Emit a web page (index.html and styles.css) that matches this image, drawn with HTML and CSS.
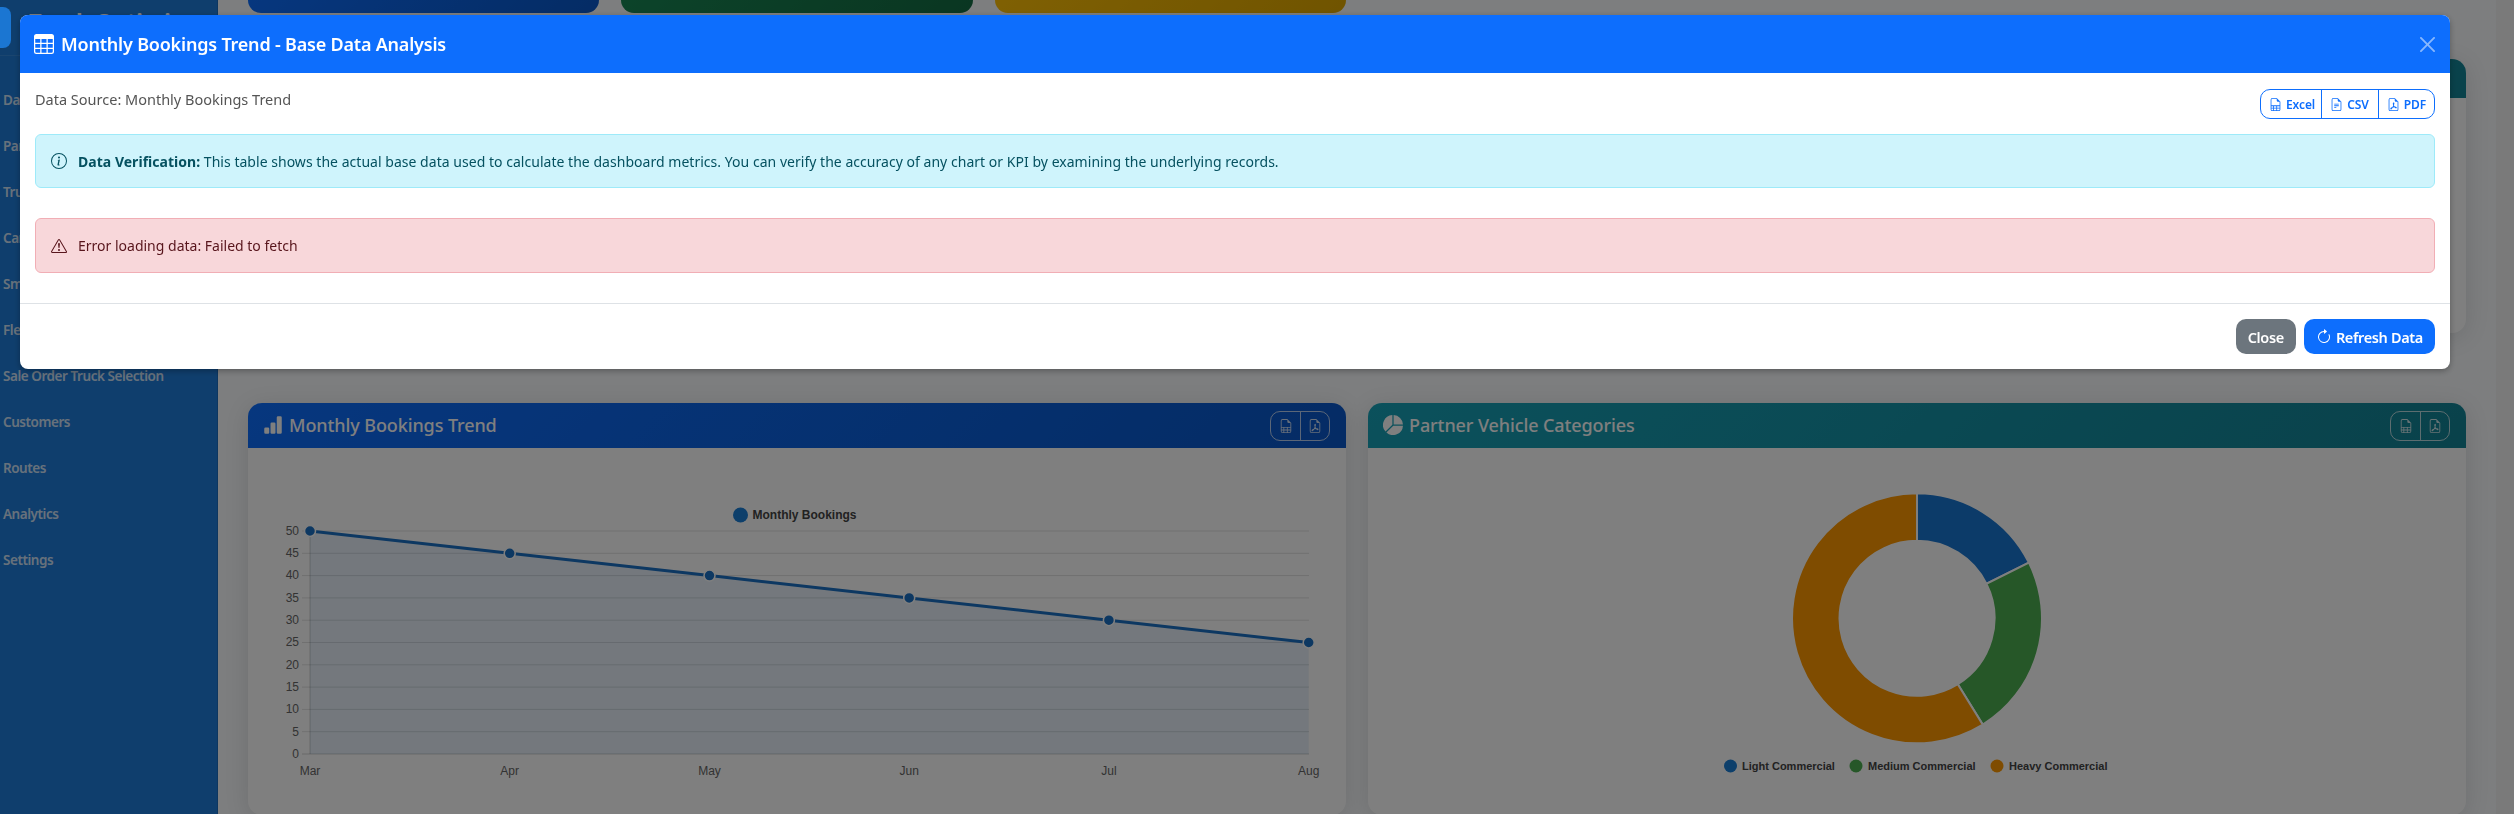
FILE: index.html
```html
<!DOCTYPE html>
<html lang="en">
<head>
<meta charset="utf-8">
<title>Monthly Bookings Trend - Base Data Analysis</title>
<link rel="stylesheet" href="styles.css">
</head>
<body>
<div class="app">
  <aside class="sidebar">
    <div class="brand">Truck Optimizer</div>
    <nav class="nav">
      <a class="nav-item">Dashboard</a>
      <a class="nav-item">Partners</a>
      <a class="nav-item">Trucks</a>
      <a class="nav-item">Cargo</a>
      <a class="nav-item">Smart Match</a>
      <a class="nav-item">Fleet</a>
      <a class="nav-item">Sale Order Truck Selection</a>
      <a class="nav-item">Customers</a>
      <a class="nav-item">Routes</a>
      <a class="nav-item">Analytics</a>
      <a class="nav-item">Settings</a>
    </nav>
  </aside>
  <main class="content">
    <section class="stats">
      <div class="stat stat-blue"></div>
      <div class="stat stat-green"></div>
      <div class="stat stat-orange"></div>
    </section>
    <section class="hidden-row">
      <div class="panel panel-short"><div class="panel-head head-blue"></div></div>
      <div class="panel panel-short"><div class="panel-head head-teal"></div></div>
    </section>
    <section class="charts">
      <article class="panel panel-tall">
        <header class="panel-head head-blue">
          <h2 class="panel-title">
            <svg class="panel-icon" viewBox="0 0 16 16"><path d="M1 11a1 1 0 0 1 1-1h2a1 1 0 0 1 1 1v3a1 1 0 0 1-1 1H2a1 1 0 0 1-1-1v-3zm5-4a1 1 0 0 1 1-1h2a1 1 0 0 1 1 1v7a1 1 0 0 1-1 1H7a1 1 0 0 1-1-1V7zm5-5a1 1 0 0 1 1-1h2a1 1 0 0 1 1 1v12a1 1 0 0 1-1 1h-2a1 1 0 0 1-1-1V2z"/></svg>
            Monthly Bookings Trend
          </h2>
          <div class="mini-group">
            <span class="mini-btn"><svg class="mini-icon" viewBox="0 0 16 16"><path d="M14 14V4.5L9.5 0H4a2 2 0 0 0-2 2v12a2 2 0 0 0 2 2h8a2 2 0 0 0 2-2zM9.5 3A1.5 1.5 0 0 0 11 4.5h2V9H3V2a1 1 0 0 1 1-1h5.5v2zM3 12v-2h2v2H3zm0 1h2v2H4a1 1 0 0 1-1-1v-1zm3 2v-2h3v2H6zm4 0v-2h3v1a1 1 0 0 1-1 1h-2zm3-3h-3v-2h3v2zm-7 0v-2h3v2H6z"/></svg></span>
            <span class="mini-btn"><svg class="mini-icon" viewBox="0 0 16 16"><path d="M14 14V4.5L9.5 0H4a2 2 0 0 0-2 2v12a2 2 0 0 0 2 2h8a2 2 0 0 0 2-2zM9.5 3A1.5 1.5 0 0 0 11 4.5h2V14a1 1 0 0 1-1 1H4a1 1 0 0 1-1-1V2a1 1 0 0 1 1-1h5.5v2z"/><path d="M4.603 14.087a.81.81 0 0 1-.438-.42c-.195-.388-.13-.776.08-1.102.198-.307.526-.568.897-.787a7.68 7.68 0 0 1 1.482-.645 19.697 19.697 0 0 0 1.062-2.227 7.269 7.269 0 0 1-.43-1.295c-.086-.4-.119-.796-.046-1.136.075-.354.274-.672.65-.823.192-.077.4-.12.602-.077a.7.7 0 0 1 .477.365c.088.164.12.356.127.538.007.188-.012.396-.047.614-.084.51-.27 1.134-.52 1.794a10.954 10.954 0 0 0 .98 1.686 5.753 5.753 0 0 1 1.334.05c.364.066.734.195.96.465.12.144.193.32.2.518.007.192-.047.382-.138.563a1.04 1.04 0 0 1-.354.416.856.856 0 0 1-.51.138c-.331-.014-.654-.196-.933-.417a5.712 5.712 0 0 1-.911-.95 11.651 11.651 0 0 0-1.997.406 11.307 11.307 0 0 1-1.02 1.51c-.292.35-.609.656-.927.787a.793.793 0 0 1-.58.029z"/></svg></span>
          </div>
        </header>
        <svg class="chart" viewBox="0 0 1098 366">
          <g class="grid">
            <path d="M54 83H1061M54 105.3H1061M54 127.6H1061M54 149.9H1061M54 172.2H1061M54 194.5H1061M54 216.8H1061M54 239.1H1061M54 261.4H1061M54 283.7H1061"/>
            <path class="axis" d="M54 306H1061M62 83V306"/>
          </g>
          <path class="area" d="M62 83L261.7 105.3L461.5 127.6L661.2 149.9L860.9 172.2L1060.7 194.5V306H62Z"/>
          <path class="line" d="M62 83L261.7 105.3L461.5 127.6L661.2 149.9L860.9 172.2L1060.7 194.5"/>
          <g class="points">
            <circle cx="62" cy="83" r="5.5"/><circle cx="261.7" cy="105.3" r="5.5"/><circle cx="461.5" cy="127.6" r="5.5"/><circle cx="661.2" cy="149.9" r="5.5"/><circle cx="860.9" cy="172.2" r="5.5"/><circle cx="1060.7" cy="194.5" r="5.5"/>
          </g>
          <g class="y-labels">
            <text x="51" y="87">50</text><text x="51" y="109">45</text><text x="51" y="131">40</text><text x="51" y="154">35</text><text x="51" y="176">30</text><text x="51" y="198">25</text><text x="51" y="221">20</text><text x="51" y="243">15</text><text x="51" y="265">10</text><text x="51" y="288">5</text><text x="51" y="310">0</text>
          </g>
          <g class="x-labels">
            <text x="62" y="327">Mar</text><text x="261.7" y="327">Apr</text><text x="461.5" y="327">May</text><text x="661.2" y="327">Jun</text><text x="860.9" y="327">Jul</text><text x="1060.7" y="327">Aug</text>
          </g>
          <circle class="dot-blue" cx="492.5" cy="67" r="7.5"/>
          <text class="legend" x="504.5" y="71">Monthly Bookings</text>
        </svg>
      </article>
      <article class="panel panel-tall">
        <header class="panel-head head-teal">
          <h2 class="panel-title">
            <svg class="panel-icon" viewBox="0 0 16 16"><path d="M15.985 8.5H8.207l-5.5 5.5a8 8 0 0 0 13.277-5.5zM2 13.292A8 8 0 0 1 7.5.015v7.778l-5.5 5.5zM8.5.015V7.5h7.485A8.001 8.001 0 0 0 8.5.015z"/></svg>
            Partner Vehicle Categories
          </h2>
          <div class="mini-group">
            <span class="mini-btn"><svg class="mini-icon" viewBox="0 0 16 16"><path d="M14 14V4.5L9.5 0H4a2 2 0 0 0-2 2v12a2 2 0 0 0 2 2h8a2 2 0 0 0 2-2zM9.5 3A1.5 1.5 0 0 0 11 4.5h2V9H3V2a1 1 0 0 1 1-1h5.5v2zM3 12v-2h2v2H3zm0 1h2v2H4a1 1 0 0 1-1-1v-1zm3 2v-2h3v2H6zm4 0v-2h3v1a1 1 0 0 1-1 1h-2zm3-3h-3v-2h3v2zm-7 0v-2h3v2H6z"/></svg></span>
            <span class="mini-btn"><svg class="mini-icon" viewBox="0 0 16 16"><path d="M14 14V4.5L9.5 0H4a2 2 0 0 0-2 2v12a2 2 0 0 0 2 2h8a2 2 0 0 0 2-2zM9.5 3A1.5 1.5 0 0 0 11 4.5h2V14a1 1 0 0 1-1 1H4a1 1 0 0 1-1-1V2a1 1 0 0 1 1-1h5.5v2z"/><path d="M4.603 14.087a.81.81 0 0 1-.438-.42c-.195-.388-.13-.776.08-1.102.198-.307.526-.568.897-.787a7.68 7.68 0 0 1 1.482-.645 19.697 19.697 0 0 0 1.062-2.227 7.269 7.269 0 0 1-.43-1.295c-.086-.4-.119-.796-.046-1.136.075-.354.274-.672.65-.823.192-.077.4-.12.602-.077a.7.7 0 0 1 .477.365c.088.164.12.356.127.538.007.188-.012.396-.047.614-.084.51-.27 1.134-.52 1.794a10.954 10.954 0 0 0 .98 1.686 5.753 5.753 0 0 1 1.334.05c.364.066.734.195.96.465.12.144.193.32.2.518.007.192-.047.382-.138.563a1.04 1.04 0 0 1-.354.416.856.856 0 0 1-.51.138c-.331-.014-.654-.196-.933-.417a5.712 5.712 0 0 1-.911-.95 11.651 11.651 0 0 0-1.997.406 11.307 11.307 0 0 1-1.02 1.51c-.292.35-.609.656-.927.787a.793.793 0 0 1-.58.029z"/></svg></span>
          </div>
        </header>
        <svg class="chart" viewBox="0 0 1098 366">
          <g class="donut" transform="translate(549 170.3)">
            <path class="seg-blue" d="M0 -125A125 125 0 0 1 111.9 -55.7L69.4 -34.5A77.5 77.5 0 0 0 0 -77.5Z"/>
            <path class="seg-green" d="M111.9 -55.7A125 125 0 0 1 65.8 106.3L40.8 65.9A77.5 77.5 0 0 0 69.4 -34.5Z"/>
            <path class="seg-orange" d="M65.8 106.3A125 125 0 1 1 0 -125L0 -77.5A77.5 77.5 0 1 0 40.8 65.9Z"/>
          </g>
          <circle class="dot-blue" cx="362.5" cy="318" r="6.5"/>
          <text class="legend legend-small" x="374" y="322">Light Commercial</text>
          <circle class="dot-green" cx="488" cy="318" r="6.5"/>
          <text class="legend legend-small" x="500" y="322">Medium Commercial</text>
          <circle class="dot-orange" cx="629" cy="318" r="6.5"/>
          <text class="legend legend-small" x="641" y="322">Heavy Commercial</text>
        </svg>
      </article>
    </section>
  </main>
  <div class="track"></div>
</div>

<div class="backdrop"></div>
<div class="toggle"></div>

<div class="modal" role="dialog">
  <header class="modal-head">
    <h1 class="modal-title">
      <svg class="title-icon" viewBox="0 0 16 16"><path d="M0 2a2 2 0 0 1 2-2h12a2 2 0 0 1 2 2v12a2 2 0 0 1-2 2H2a2 2 0 0 1-2-2V2zm15 2h-4v3h4V4zm0 4h-4v3h4V8zm0 4h-4v3h3a1 1 0 0 0 1-1v-2zm-5 3v-3H6v3h4zm-5 0v-3H1v2a1 1 0 0 0 1 1h3zm-4-4h4V8H1v3zm0-4h4V4H1v3zm5-3v3h4V4H6zm4 4H6v3h4V8z"/></svg>
      Monthly Bookings Trend - Base Data Analysis
    </h1>
    <svg class="close-x" viewBox="0 0 16 16"><path d="M.293.293a1 1 0 0 1 1.414 0L8 6.586 14.293.293a1 1 0 1 1 1.414 1.414L9.414 8l6.293 6.293a1 1 0 0 1-1.414 1.414L8 9.414l-6.293 6.293a1 1 0 0 1-1.414-1.414L6.586 8 .293 1.707a1 1 0 0 1 0-1.414z"/></svg>
  </header>
  <div class="modal-body">
    <div class="source-row">
      <span class="source">Data Source: Monthly Bookings Trend</span>
      <div class="export-group">
        <button class="export-btn export-excel"><svg class="export-icon" viewBox="0 0 16 16"><path d="M14 14V4.5L9.5 0H4a2 2 0 0 0-2 2v12a2 2 0 0 0 2 2h8a2 2 0 0 0 2-2zM9.5 3A1.5 1.5 0 0 0 11 4.5h2V9H3V2a1 1 0 0 1 1-1h5.5v2zM3 12v-2h2v2H3zm0 1h2v2H4a1 1 0 0 1-1-1v-1zm3 2v-2h3v2H6zm4 0v-2h3v1a1 1 0 0 1-1 1h-2zm3-3h-3v-2h3v2zm-7 0v-2h3v2H6z"/></svg>Excel</button>
        <button class="export-btn export-csv"><svg class="export-icon" viewBox="0 0 16 16"><path d="M5.5 7a.5.5 0 0 0 0 1h5a.5.5 0 0 0 0-1h-5zM5 9.5a.5.5 0 0 1 .5-.5h5a.5.5 0 0 1 0 1h-5a.5.5 0 0 1-.5-.5zm0 2a.5.5 0 0 1 .5-.5h2a.5.5 0 0 1 0 1h-2a.5.5 0 0 1-.5-.5z"/><path d="M9.5 0H4a2 2 0 0 0-2 2v12a2 2 0 0 0 2 2h8a2 2 0 0 0 2-2V4.5L9.5 0zm0 1v2A1.5 1.5 0 0 0 11 4.5h2V14a1 1 0 0 1-1 1H4a1 1 0 0 1-1-1V2a1 1 0 0 1 1-1h5.5z"/></svg>CSV</button>
        <button class="export-btn"><svg class="export-icon" viewBox="0 0 16 16"><path d="M14 14V4.5L9.5 0H4a2 2 0 0 0-2 2v12a2 2 0 0 0 2 2h8a2 2 0 0 0 2-2zM9.5 3A1.5 1.5 0 0 0 11 4.5h2V14a1 1 0 0 1-1 1H4a1 1 0 0 1-1-1V2a1 1 0 0 1 1-1h5.5v2z"/><path d="M4.603 14.087a.81.81 0 0 1-.438-.42c-.195-.388-.13-.776.08-1.102.198-.307.526-.568.897-.787a7.68 7.68 0 0 1 1.482-.645 19.697 19.697 0 0 0 1.062-2.227 7.269 7.269 0 0 1-.43-1.295c-.086-.4-.119-.796-.046-1.136.075-.354.274-.672.65-.823.192-.077.4-.12.602-.077a.7.7 0 0 1 .477.365c.088.164.12.356.127.538.007.188-.012.396-.047.614-.084.51-.27 1.134-.52 1.794a10.954 10.954 0 0 0 .98 1.686 5.753 5.753 0 0 1 1.334.05c.364.066.734.195.96.465.12.144.193.32.2.518.007.192-.047.382-.138.563a1.04 1.04 0 0 1-.354.416.856.856 0 0 1-.51.138c-.331-.014-.654-.196-.933-.417a5.712 5.712 0 0 1-.911-.95 11.651 11.651 0 0 0-1.997.406 11.307 11.307 0 0 1-1.02 1.51c-.292.35-.609.656-.927.787a.793.793 0 0 1-.58.029z"/></svg>PDF</button>
      </div>
    </div>
    <div class="alert alert-info">
      <svg class="alert-icon" viewBox="0 0 16 16"><path d="M8 15A7 7 0 1 1 8 1a7 7 0 0 1 0 14zm0 1A8 8 0 1 0 8 0a8 8 0 0 0 0 16z"/><path d="m8.93 6.588-2.29.287-.082.38.45.083c.294.07.352.176.288.469l-.738 3.468c-.194.897.105 1.319.808 1.319.545 0 1.178-.252 1.465-.598l.088-.416c-.2.176-.492.246-.686.246-.275 0-.375-.193-.304-.533L8.93 6.588zM9 4.5a1 1 0 1 1-2 0 1 1 0 0 1 2 0z"/></svg>
      <span><strong class="alert-strong">Data Verification:</strong> This table shows the actual base data used to calculate the dashboard metrics. You can verify the accuracy of any chart or KPI by examining the underlying records.</span>
    </div>
    <div class="alert alert-danger">
      <svg class="alert-icon" viewBox="0 0 16 16"><path d="M7.938 2.016A.13.13 0 0 1 8.002 2a.13.13 0 0 1 .063.016.146.146 0 0 1 .054.057l6.857 11.667c.036.06.035.124.002.183a.163.163 0 0 1-.054.06.116.116 0 0 1-.066.017H1.146a.115.115 0 0 1-.066-.017.163.163 0 0 1-.054-.06.176.176 0 0 1 .002-.183L7.884 2.073a.147.147 0 0 1 .054-.057zm1.044-.45a1.13 1.13 0 0 0-1.96 0L.165 13.233c-.457.778.091 1.767.98 1.767h13.713c.889 0 1.438-.99.98-1.767L8.982 1.566z"/><path d="M7.002 12a1 1 0 1 1 2 0 1 1 0 0 1-2 0zM7.1 5.995a.905.905 0 1 1 1.8 0l-.35 3.507a.552.552 0 0 1-1.1 0L7.1 5.995z"/></svg>
      <span>Error loading data: Failed to fetch</span>
    </div>
  </div>
  <footer class="modal-foot">
    <button class="btn btn-grey">Close</button>
    <button class="btn btn-blue"><svg class="btn-icon" viewBox="0 0 16 16"><path d="M8 3a5 5 0 1 0 4.546 2.914.5.5 0 0 1 .908-.417A6 6 0 1 1 8 2v1z"/><path d="M8 4.466V.534a.25.25 0 0 1 .41-.192l2.36 1.966c.12.1.12.284 0 .384L8.41 4.658A.25.25 0 0 1 8 4.466z"/></svg>Refresh Data</button>
  </footer>
</div>
</body>
</html>
```

FILE: styles.css
```css
* { box-sizing: border-box; }
html, body { margin: 0; height: 814px; overflow: hidden; }
body {
  font-family: "Noto Sans", "Open Sans", sans-serif;
  font-size: 14px;
  letter-spacing: 0;
  color: #212529;
  background: #fafcfe;
}
.app { display: flex; height: 814px; }

/* sidebar */
.sidebar {
  flex: 0 0 218px;
  min-width: 0;
  overflow: hidden;
  background: #1f7ddb;
  color: #fff;
  border-right: 1px solid #1a6dc0;
}
.brand {
  height: 56px;
  padding: 5px 0 0 29px;
  font-size: 22px;
  font-weight: 700;
  white-space: nowrap;
  border-bottom: 1px solid rgba(255,255,255,.1);
}
.nav { display: flex; flex-direction: column; padding-top: 22px; }
.nav-item {
  height: 46px;
  padding: 13px 3px 13px 3px;
  line-height: 18px;
  font-size: 13.5px;
  font-weight: 600;
  letter-spacing: -.45px;
  color: rgba(255,255,255,.8);
  white-space: nowrap;
}

/* main */
.content { flex: 1; min-width: 0; padding: 0 30px; overflow: hidden; }
.track { flex: 0 0 18px; background: #f4f4f4; }
.stats { display: grid; grid-template-columns: repeat(6, 1fr); gap: 22px; height: 13px; }
.stat { border-radius: 0 0 14px 14px; }
.stat-blue { background: linear-gradient(135deg, #0d6efd, #0a58ca); }
.stat-green { background: linear-gradient(135deg, #198754, #146c43); }
.stat-orange { background: linear-gradient(135deg, #ffc107, #e0a800); }
.hidden-row { display: grid; grid-template-columns: 1fr 1fr; gap: 22px; margin-top: 46px; }
.charts { display: grid; grid-template-columns: 1fr 1fr; gap: 22px; margin-top: 70px; }
.panel {
  background: #fff;
  border-radius: 14px;
  box-shadow: 0 4px 24px rgba(0,0,0,.12);
  overflow: hidden;
}
.panel-short { height: 274px; }
.panel-short .panel-head { height: 39px; }
.panel-tall { height: 412px; }
.panel-head {
  height: 45px;
  display: flex;
  align-items: center;
  justify-content: space-between;
  padding: 0 16px 0 15px;
  color: #fff;
}
.head-blue { background: linear-gradient(135deg, #0d6efd, #0a58ca); }
.head-teal { background: linear-gradient(135deg, #17a2b8, #138496); }
.panel-title {
  margin: 0 0 2px;
  display: flex;
  align-items: center;
  gap: 6px;
  font-size: 18px;
  font-weight: 500;
  letter-spacing: -.1px;
  line-height: 22px;
}
.panel-icon { width: 20px; height: 20px; fill: currentColor; }
.mini-group {
  display: flex;
  height: 30px;
  border: 1px solid rgba(255,255,255,.7);
  border-radius: 10px;
}
.mini-btn { width: 29px; display: flex; align-items: center; justify-content: center; }
.mini-btn + .mini-btn { border-left: 1px solid rgba(255,255,255,.7); }
.mini-icon { width: 14px; height: 14px; fill: rgba(255,255,255,.8); }
.chart { display: block; width: 1098px; height: 366px; }
.grid path { fill: none; stroke: rgba(0,0,0,.12); stroke-width: 1; }
.grid .axis { stroke: rgba(0,0,0,.18); }
.area { fill: rgba(25,118,210,.1); }
.line { fill: none; stroke: #1b70c4; stroke-width: 3; }
.points circle { fill: #1b70c4; stroke: #fff; stroke-width: 1.5; }
.y-labels text, .x-labels text {
  font-family: "Liberation Sans", Arial, sans-serif;
  font-size: 12px;
  fill: #666;
}
.y-labels text { text-anchor: end; }
.x-labels text { text-anchor: middle; }
.legend {
  font-family: "Liberation Sans", Arial, sans-serif;
  font-size: 12px;
  font-weight: 700;
  fill: #444;
}
.legend-small { font-size: 11px; }
.dot-blue { fill: #1b7ed6; }
.dot-green { fill: #4caf50; }
.dot-orange { fill: #ff9800; }
.donut path { stroke: #fff; stroke-width: 2; }
.seg-blue { fill: #1976d2; }
.seg-green { fill: #4caf50; }
.seg-orange { fill: #ff9800; }

/* overlays */
.backdrop { position: fixed; inset: 0; background: rgba(0,0,0,.5); z-index: 10; }
.toggle {
  position: fixed;
  left: 0;
  top: 7px;
  width: 11px;
  height: 41px;
  background: #1b76d2;
  border-radius: 0 8px 8px 0;
  z-index: 11;
}
.modal {
  position: fixed;
  left: 20px;
  top: 15px;
  width: 2430px;
  height: 354px;
  background: #fff;
  border-radius: 8px;
  overflow: hidden;
  z-index: 20;
  box-shadow: 0 2px 6px rgba(0,0,0,.3);
}
.modal-head {
  height: 58px;
  background: #0d6efd;
  color: #fff;
  display: flex;
  align-items: center;
  justify-content: space-between;
  padding: 0 15px 0 14px;
}
.modal-title {
  margin: 0;
  display: flex;
  align-items: center;
  gap: 7px;
  font-size: 18px;
  font-weight: 600;
  letter-spacing: -.2px;
}
.title-icon { width: 20px; height: 20px; fill: #fff; }
.close-x { width: 15px; height: 15px; fill: rgba(255,255,255,.5); }
.modal-body { padding: 16px 15px 0; height: 230px; }
.source-row { display: flex; justify-content: space-between; align-items: flex-start; height: 45px; }
.source { color: #555; line-height: 20px; font-size: 14.5px; }
.export-group {
  display: flex;
  height: 30px;
  border: 1px solid #0d6efd;
  border-radius: 10px;
}
.export-btn {
  display: flex;
  align-items: center;
  gap: 4px;
  border: 0;
  background: none;
  padding: 0 8px;
  font: 600 12px "Noto Sans", sans-serif;
  letter-spacing: -.1px;
  color: #0d6efd;
}
.export-excel { padding-right: 6px; }
.export-csv { padding-right: 9px; }
.export-btn + .export-btn { border-left: 1px solid #0d6efd; }
.export-icon { width: 13px; height: 13px; fill: #0d6efd; }
.alert {
  display: flex;
  align-items: center;
  gap: 11px;
  padding: 0 15px;
  border: 1px solid;
  border-radius: 6px;
}
.alert-info { height: 54px; background: #cff4fc; border-color: #9eeaf9; color: #055160; margin-bottom: 30px; letter-spacing: .03px; }
.alert-danger { height: 55px; background: #f8d7da; border-color: #f1aeb5; color: #58151c; }
.alert-icon { width: 16px; height: 16px; fill: currentColor; flex: none; }
.alert-strong { font-weight: 700; }
.modal-foot {
  height: 66px;
  border-top: 1px solid #dee2e6;
  display: flex;
  justify-content: flex-end;
  align-items: center;
  gap: 8px;
  padding: 0 15px;
}
.btn {
  display: flex;
  align-items: center;
  gap: 4px;
  height: 35px;
  padding: 0 12px;
  border: 0;
  border-radius: 10px;
  color: #fff;
  font: 600 14.5px "Noto Sans", sans-serif;
  letter-spacing: -.35px;
}
.btn-grey { background: #6c757d; }
.btn-blue { background: #0d6efd; }
.btn-icon { width: 16px; height: 16px; fill: #fff; }
```
